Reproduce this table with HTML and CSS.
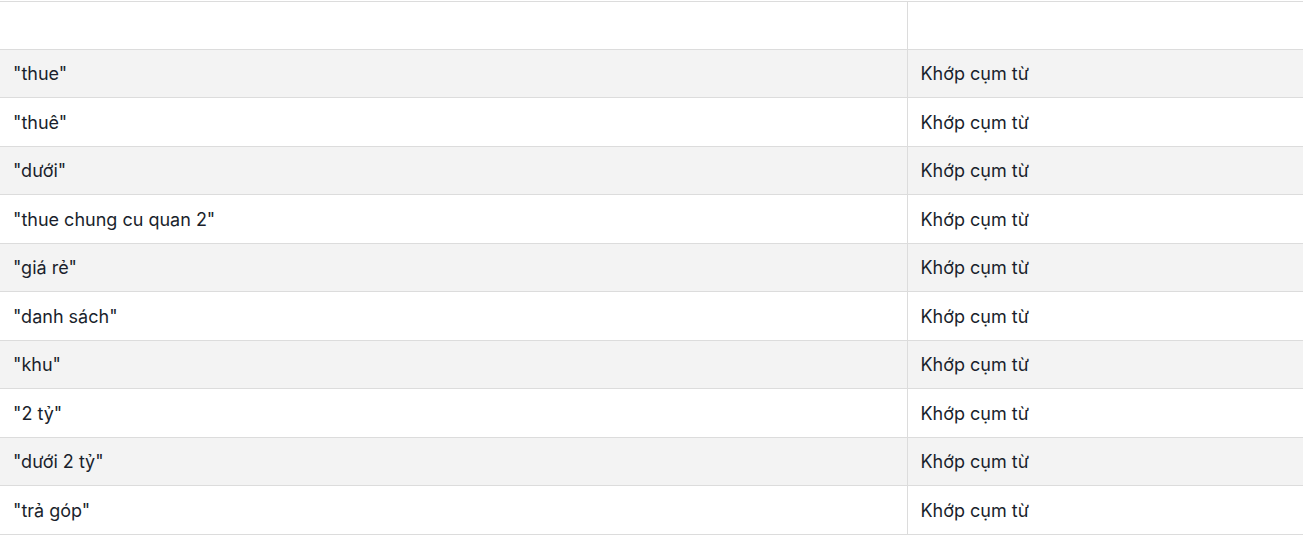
FILE: index.html
```html
<!DOCTYPE html>
<html lang="vi">
<head>
<meta charset="utf-8">
<link rel="stylesheet" href="styles.css">
</head>
<body>
<table class="kw-table">
  <thead>
    <tr><th class="col-term"></th><th class="col-type"></th></tr>
  </thead>
  <tbody>
    <tr><td>"thue"</td><td>Khớp cụm từ</td></tr>
    <tr><td>"thuê"</td><td>Khớp cụm từ</td></tr>
    <tr><td>"dưới"</td><td>Khớp cụm từ</td></tr>
    <tr><td>"thue chung cu quan 2"</td><td>Khớp cụm từ</td></tr>
    <tr><td>"giá rẻ"</td><td>Khớp cụm từ</td></tr>
    <tr><td>"danh sách"</td><td>Khớp cụm từ</td></tr>
    <tr><td>"khu"</td><td>Khớp cụm từ</td></tr>
    <tr><td>"2 tỷ"</td><td>Khớp cụm từ</td></tr>
    <tr><td>"dưới 2 tỷ"</td><td>Khớp cụm từ</td></tr>
    <tr><td>"trả góp"</td><td>Khớp cụm từ</td></tr>
  </tbody>
</table>
</body>
</html>
```

FILE: styles.css
```css
html, body {
  margin: 0;
  padding: 0;
  background: #ffffff;
}
body {
  padding-top: 1px;
  font-family: Inter, Roboto, "Liberation Sans", sans-serif;
  font-size: 18px;
  color: #1a1f2c;
}
.kw-table {
  width: 100%;
  border-collapse: collapse;
  table-layout: fixed;
}
.col-term { width: 907px; }
.kw-table th,
.kw-table td {
  height: 48.5px;
  padding: 2px 12px 0 13px;
  border-top: 1px solid #dcdcdc;
  border-bottom: 1px solid #dcdcdc;
  text-align: left;
  font-weight: 400;
  vertical-align: middle;
  box-sizing: border-box;
  line-height: 24px;
  white-space: nowrap;
}
.kw-table th {
  height: 47.5px;
}
.kw-table th + th,
.kw-table td + td {
  border-left: 1px solid #dcdcdc;
}
.kw-table tbody tr:nth-child(odd) {
  background: #f3f3f3;
}
```
